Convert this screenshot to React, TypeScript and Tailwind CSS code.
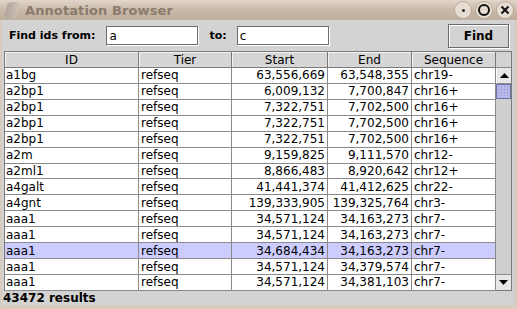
import React from "react";

const rows: [string, string, string, string, string][] = [
  ["a1bg", "refseq", "63,556,669", "63,548,355", "chr19-"],
  ["a2bp1", "refseq", "6,009,132", "7,700,847", "chr16+"],
  ["a2bp1", "refseq", "7,322,751", "7,702,500", "chr16+"],
  ["a2bp1", "refseq", "7,322,751", "7,702,500", "chr16+"],
  ["a2bp1", "refseq", "7,322,751", "7,702,500", "chr16+"],
  ["a2m", "refseq", "9,159,825", "9,111,570", "chr12-"],
  ["a2ml1", "refseq", "8,866,483", "8,920,642", "chr12+"],
  ["a4galt", "refseq", "41,441,374", "41,412,625", "chr22-"],
  ["a4gnt", "refseq", "139,333,905", "139,325,764", "chr3-"],
  ["aaa1", "refseq", "34,571,124", "34,163,273", "chr7-"],
  ["aaa1", "refseq", "34,571,124", "34,163,273", "chr7-"],
  ["aaa1", "refseq", "34,684,434", "34,163,273", "chr7-"],
  ["aaa1", "refseq", "34,571,124", "34,379,574", "chr7-"],
  ["aaa1", "refseq", "34,571,124", "34,381,103", "chr7-"],
];

const font = { fontFamily: '"DejaVu Sans", sans-serif' };

function HeaderCell({ w, label }: { w: string; label: string }) {
  return (
    <div className={`${w} h-[16px] border-r border-b border-[#7a7a7a] bg-[#d6d6d6] flex items-center justify-center text-[12px] text-black leading-none shadow-[inset_1px_1px_0_#f4f4f4]`}>
      {label}
    </div>
  );
}

export default function App() {
  return (
    <div
      className="w-[517px] h-[309px] bg-[#d8ccbe] flex flex-col overflow-hidden"
      style={font}
    >
      {/* Title bar */}
      <div className="h-[20px] flex items-center bg-gradient-to-b from-[#e2d6ca] via-[#c9b9a8] to-[#bfae9c] relative">
        <div className="ml-[6px] w-[12px] h-[17px] rounded-[4px] bg-gradient-to-r from-[#a9a097] to-[#ccc2b8] -skew-x-12 opacity-80" />
        <span className="ml-[7px] text-[13px] font-bold text-[#8a7b6c] leading-none tracking-[0.1px]">
          Annotation Browser
        </span>
        <div className="ml-auto mr-[3px] flex items-center gap-[3px]">
          <div className="w-[18px] h-[18px] rounded-full bg-[#e6ddd3] border border-[#b9ab9b] flex items-center justify-center">
            <div className="w-[3px] h-[3px] rounded-full bg-[#222]" />
          </div>
          <div className="w-[18px] h-[18px] rounded-full bg-[#e6ddd3] border border-[#b9ab9b] flex items-center justify-center">
            <div className="w-[12px] h-[12px] rounded-full border-[2px] border-[#111]" />
          </div>
          <div className="w-[18px] h-[18px] rounded-full bg-[#e6ddd3] border border-[#b9ab9b] flex items-center justify-center">
            <svg width="10" height="10" viewBox="0 0 10 10">
              <path d="M1.5 1.5 L8.5 8.5 M8.5 1.5 L1.5 8.5" stroke="#111" strokeWidth="2" />
            </svg>
          </div>
        </div>
      </div>

      {/* Content */}
      <div className="flex-1 mx-[2px] mr-[3px] mb-[4px] bg-[#d3d3d3] flex flex-col">
        {/* Search row */}
        <div className="h-[31px] flex items-center">
          <span className="ml-[7px] text-[11px] font-bold text-black leading-none">Find ids from:</span>
          <div className="ml-[11px] w-[92px] h-[19px] bg-white border border-[#6e6e6e] shadow-[1px_1px_0_#ffffff] flex items-center pl-[2px] text-[12px] leading-none">
            a
          </div>
          <span className="ml-[11px] text-[11px] font-bold text-black leading-none">to:</span>
          <div className="ml-[10px] w-[92px] h-[19px] bg-white border border-[#6e6e6e] shadow-[1px_1px_0_#ffffff] flex items-center pl-[2px] text-[12px] leading-none">
            c
          </div>
          <div className="ml-auto mr-[5px] w-[61px] h-[24px] border border-[#6a6a6a] shadow-[inset_1px_1px_0_#ffffff,1px_1px_0_#ffffff] bg-[#d3d3d3] flex items-center justify-center text-[12px] font-bold leading-none">
            Find
          </div>
        </div>

        {/* Table */}
        <div className="ml-[2px] w-[508px] h-[240px] border-l border-t border-[#7a7a7a] flex">
          <div className="flex flex-col">
            <div className="flex">
              <HeaderCell w="w-[134px]" label="ID" />
              <HeaderCell w="w-[93px]" label="Tier" />
              <HeaderCell w="w-[96px]" label="Start" />
              <HeaderCell w="w-[84px]" label="End" />
              <HeaderCell w="w-[84px]" label="Sequence" />
            </div>
            {rows.map((r, i) => {
              const sel = i === 11;
              const bg = sel ? "bg-[#ccccff]" : "bg-white";
              return (
                <div key={i} className={`flex h-[16px] ${bg} text-[12px] leading-none text-black`}>
                  <div className="w-[134px] border-r border-b border-[#8a8a8a] flex items-center pl-[1px]">{r[0]}</div>
                  <div className="w-[93px] border-r border-b border-[#8a8a8a] flex items-center pl-[2px]">{r[1]}</div>
                  <div className="w-[96px] border-r border-b border-[#8a8a8a] flex items-center justify-end pr-[2px]">{r[2]}</div>
                  <div className="w-[84px] border-r border-b border-[#8a8a8a] flex items-center justify-end pr-[2px]">{r[3]}</div>
                  <div className="w-[84px] border-r border-b border-[#8a8a8a] flex items-center pl-[2px]">{r[4]}</div>
                </div>
              );
            })}
          </div>
          {/* Scrollbar */}
          <div className="w-[17px] flex flex-col border-r border-b border-[#7a7a7a]">
            <div className="h-[16px] bg-[#d3d3d3] border-b border-[#8a8a8a]" />
            <div className="h-[16px] bg-[#e6e6e6] border-b border-[#8a8a8a] border-l border-l-white flex items-center justify-center">
              <svg width="9" height="5" viewBox="0 0 9 5"><path d="M4.5 0 L9 5 L0 5 Z" fill="#000" /></svg>
            </div>
            <div className="h-[15px] bg-[#b8b8e8] border border-[#6e6ea8] bg-[radial-gradient(#9a9ad0_0.6px,transparent_0.8px)] bg-[length:3px_3px]" />
            <div className="flex-1 bg-[#cfcfcf]" />
            <div className="h-[16px] bg-[#e6e6e6] border-t border-[#8a8a8a] flex items-center justify-center">
              <svg width="9" height="5" viewBox="0 0 9 5"><path d="M0 0 L9 0 L4.5 5 Z" fill="#000" /></svg>
            </div>
          </div>
        </div>

        {/* Status bar */}
        <div className="flex-1 flex items-center pl-[1px]">
          <span className="text-[12px] font-bold leading-none">43472 results</span>
        </div>
      </div>
    </div>
  );
}
